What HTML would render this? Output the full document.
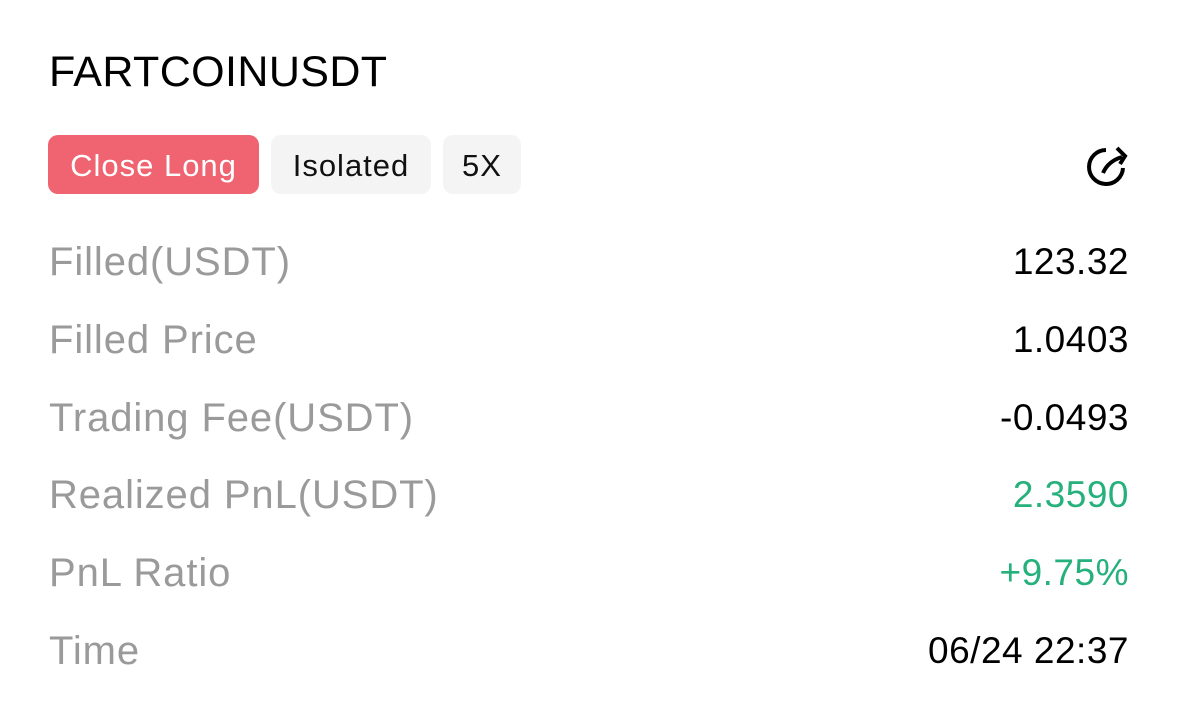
<!DOCTYPE html>
<html><head><meta charset="utf-8"><style>
body{margin:0;width:1179px;height:714px;background:#fff;font-family:"Liberation Sans",sans-serif;position:relative;overflow:hidden}
.t{position:absolute;left:49px;top:46px;font-size:43px;color:#000;letter-spacing:0.4px;line-height:52px}
.b{position:absolute;top:135px;height:59px;border-radius:10px;font-size:31px;line-height:62px;text-align:center;background:#f4f4f4;color:#111;letter-spacing:1px}
.r{position:absolute;left:49px;right:50px;height:50px;font-size:40px;line-height:52px}
.r .l{position:absolute;left:0;color:#9a9a9a;letter-spacing:0.9px}
.r .v{position:absolute;right:0;color:#000;font-size:37px;letter-spacing:0.5px}
.g{color:#25b07c!important}
</style></head><body>
<div class="t">FARTCOINUSDT</div>
<div class="b" style="left:48px;width:211px;background:#f06371;color:#fff">Close Long</div>
<div class="b" style="left:271px;width:160px">Isolated</div>
<div class="b" style="left:443px;width:78px">5X</div>
<svg style="position:absolute;left:1080px;top:140px" width="50" height="50" viewBox="0 0 50 50">
<path d="M26 10 A17 17 0 1 0 43 28" fill="none" stroke="#000" stroke-width="4"/>
<path d="M23 33 C26 26 32 20 42 17" fill="none" stroke="#000" stroke-width="4"/>
<path d="M37 8 L45 16 L40 24" fill="none" stroke="#000" stroke-width="4"/>
</svg>
<div class="r" style="top:236px"><span class="l">Filled(USDT)</span><span class="v">123.32</span></div>
<div class="r" style="top:314px"><span class="l">Filled Price</span><span class="v">1.0403</span></div>
<div class="r" style="top:392px"><span class="l">Trading Fee(USDT)</span><span class="v">-0.0493</span></div>
<div class="r" style="top:469px"><span class="l">Realized PnL(USDT)</span><span class="v g">2.3590</span></div>
<div class="r" style="top:547px"><span class="l">PnL Ratio</span><span class="v g">+9.75%</span></div>
<div class="r" style="top:625px"><span class="l">Time</span><span class="v">06/24 22:37</span></div>
</body></html>
